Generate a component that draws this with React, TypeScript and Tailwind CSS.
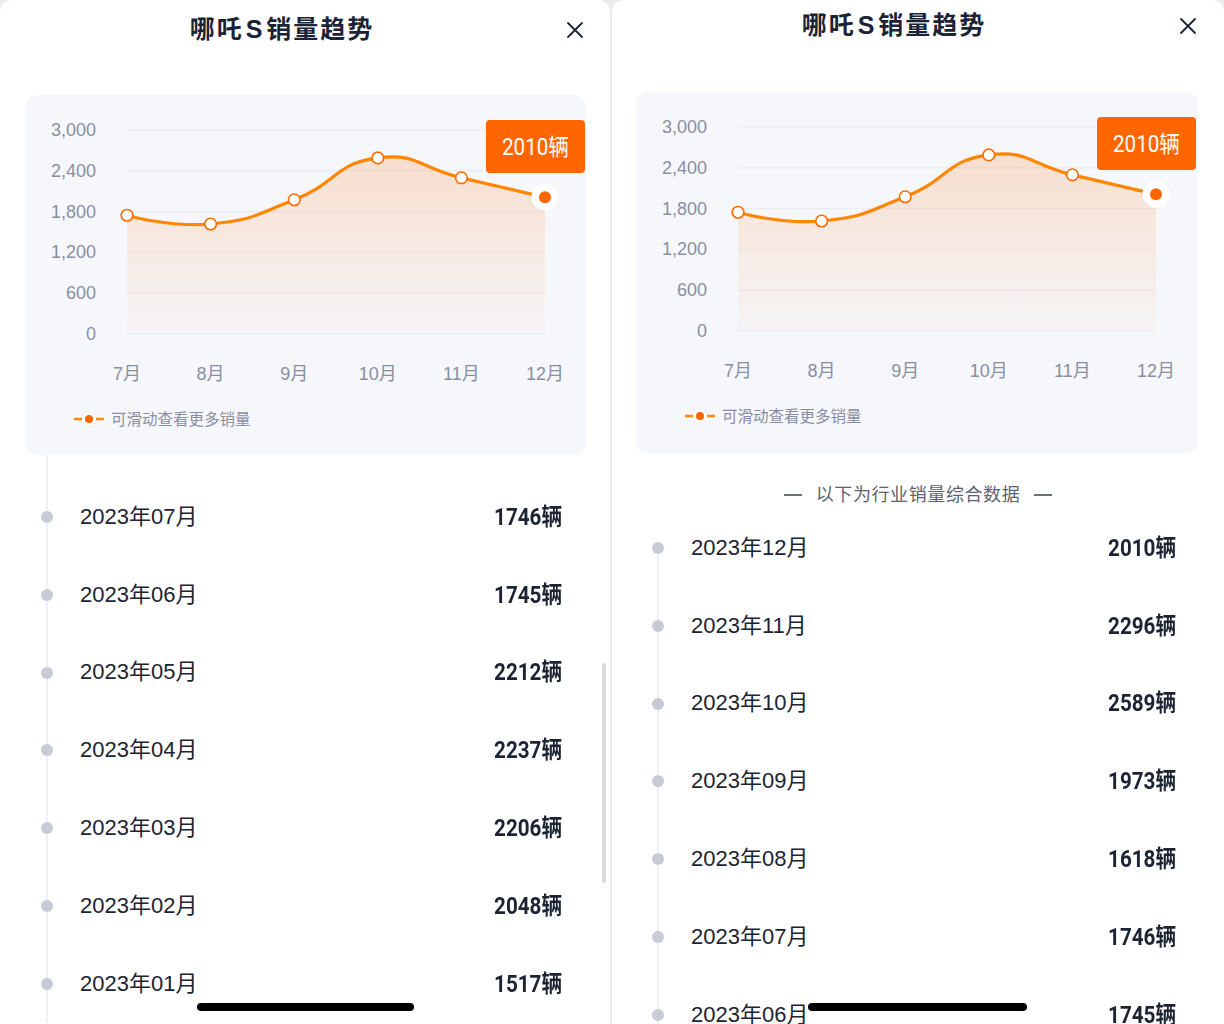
import React from "react";

const VALS = [1746, 1618, 1973, 2589, 2296, 2010];
const MONTHS = ["7月", "8月", "9月", "10月", "11月", "12月"];
const X0 = 102;
const X1 = 520;
const Y0 = 239;
const YT = 35;
const FONT = '"Liberation Sans", "Noto Sans CJK SC", sans-serif';

const pts: [number, number][] = VALS.map((v, i) => [
  X0 + (i * (X1 - X0)) / 5,
  Y0 - (v * (Y0 - YT)) / 3000,
]);

function smoothPath(p: [number, number][]) {
  const s = 0.5;
  const cps = p.map((cur, i) => {
    const prev = p[i - 1];
    const next = p[i + 1];
    if (!prev || !next) return [cur, cur];
    const vx = (next[0] - prev[0]) * s;
    const vy = (next[1] - prev[1]) * s;
    const dp = Math.hypot(cur[0] - prev[0], cur[1] - prev[1]);
    const dn = Math.hypot(next[0] - cur[0], next[1] - cur[1]);
    const r = dn / (dp + dn);
    return [
      [cur[0] - vx * (1 - r), cur[1] - vy * (1 - r)],
      [cur[0] + vx * r, cur[1] + vy * r],
    ];
  });
  let d = `M${p[0][0]},${p[0][1]}`;
  for (let i = 1; i < p.length; i++) {
    const a = cps[i - 1][1];
    const b = cps[i][0];
    d += ` C${a[0]},${a[1]} ${b[0]},${b[1]} ${p[i][0]},${p[i][1]}`;
  }
  return d;
}

const LINE = smoothPath(pts);
const AREA = `${LINE} L${X1},${Y0} L${X0},${Y0} Z`;
const YLABELS = ["3,000", "2,400", "1,800", "1,200", "600", "0"];

function Chart({ h, id }: { h: number; id: string }) {
  return (
    <div className={h === 360 ? "h-[360px] w-[561px] rounded-[12px] bg-[#f6f7fb]" : "h-[361px] w-[562px] rounded-[12px] bg-[#f6f7fb]"}>
      <svg width="562" height={h} viewBox={`0 0 562 ${h}`} style={{ display: "block" }}>
        <defs>
          <linearGradient id={`g${id}`} x1="0" y1="60" x2="0" y2="239" gradientUnits="userSpaceOnUse">
            <stop offset="0" stopColor="#ff7a1a" stopOpacity="0.2" />
            <stop offset="1" stopColor="#ff7a1a" stopOpacity="0.02" />
          </linearGradient>
          <filter id={`s${id}`} x="-50%" y="-50%" width="200%" height="200%">
            <feDropShadow dx="0" dy="0" stdDeviation="1" floodColor="#000" floodOpacity="0.12" />
          </filter>
        </defs>
        {YLABELS.map((l, i) => {
          const y = YT + (i * (Y0 - YT)) / 5;
          return (
            <g key={l}>
              <line x1={X0} x2={X1} y1={y} y2={y} stroke="#e7e8ee" strokeWidth="1" />
              <text x="71" y={y} textAnchor="end" dominantBaseline="central" fontSize="18" fill="#888fa2" fontFamily={FONT}>
                {l}
              </text>
            </g>
          );
        })}
        <path d={AREA} fill={`url(#g${id})`} />
        <path d={LINE} fill="none" stroke="#ff8600" strokeWidth="3.2" strokeLinejoin="round" />
        {pts.slice(0, 5).map((p, i) => (
          <circle key={i} cx={p[0]} cy={p[1]} r="5.8" fill="#fff" stroke="#ff6a00" strokeWidth="1.6" />
        ))}
        <circle cx={pts[5][0]} cy={pts[5][1]} r="13.5" fill="#fff" />
        <circle cx={pts[5][0]} cy={pts[5][1]} r="6" fill="#ff6600" />
        {MONTHS.map((m, i) => (
          <text key={m} x={pts[i][0]} y="279" textAnchor="middle" dominantBaseline="central" fontSize="18" fill="#888fa2" fontFamily={FONT}>
            {m}
          </text>
        ))}
        <rect x="461" y="25" width="99" height="53" rx="4" fill="#ff6600" />
        <text
          x="510.5"
          y="52"
          textAnchor="middle"
          dominantBaseline="central"
          fontSize="23"
          fill="#fff"
          fontFamily='Roboto, "Noto Sans CJK SC", sans-serif'
          textLength="67"
          lengthAdjust="spacingAndGlyphs"
        >
          2010辆
        </text>
        <line x1="49" x2="57" y1="324" y2="324" stroke="#ff8a00" strokeWidth="2.5" />
        <line x1="71" x2="79" y1="324" y2="324" stroke="#ff8a00" strokeWidth="2.5" />
        <circle cx="64" cy="324" r="7" fill="#fff" filter={`url(#s${id})`} />
        <circle cx="64" cy="324" r="4" fill="#ff6600" />
        <text x="86" y="324" dominantBaseline="central" fontSize="15.5" fill="#888fa2" fontFamily={FONT}>
          可滑动查看更多销量
        </text>
      </svg>
    </div>
  );
}

function CloseIcon() {
  return (
    <svg width="18" height="18" viewBox="0 0 18 18">
      <path d="M2 2 L16 16 M16 2 L2 16" stroke="#1b2336" strokeWidth="1.8" strokeLinecap="round" />
    </svg>
  );
}

function Row({ date, value, topLine, bottomLine, left }: { date: string; value: string; topLine: boolean; bottomLine: boolean; left: boolean }) {
  return (
    <div className="flex h-[77.8px] shrink-0 items-stretch pr-[48px]">
      <div className={left ? "ml-[41px] flex w-[12px] flex-col items-center" : "ml-[40px] flex w-[12px] flex-col items-center"}>
        <div className={topLine ? "w-[2px] flex-1 bg-[#eef0f4]" : "w-[2px] flex-1"} />
        <div className="h-[12px] w-[12px] rounded-full bg-[#c8cbd6]" />
        <div className={bottomLine ? "w-[2px] flex-1 bg-[#eef0f4]" : "w-[2px] flex-1"} />
      </div>
      <div className="ml-[27px] self-center text-[22px] leading-none text-[#1c2434]" style={{ fontFamily: FONT }}>
        {date}
      </div>
      <div
        className="ml-auto origin-right scale-x-[0.86] self-center text-[24px] font-bold leading-none text-[#1c2434]"
        style={{ fontFamily: 'Roboto, "Noto Sans CJK SC", sans-serif' }}
      >
        {value}
      </div>
    </div>
  );
}

function Header({ h }: { h: "l" | "r" }) {
  return (
    <div className={h === "l" ? "relative flex h-[60px] shrink-0 items-center justify-center pr-[46px]" : "relative flex h-[52px] shrink-0 items-center justify-center pr-[48px]"}>
      <div className="text-[25px] font-bold tracking-[2px] text-[#1b2336]" style={{ fontFamily: FONT }}>
        哪吒<span className="mx-[2px]">S</span>销量趋势
      </div>
      <div className={h === "l" ? "absolute right-[26px] top-[21px]" : "absolute right-[27px] top-[17px]"}>
        <CloseIcon />
      </div>
    </div>
  );
}

const LEFT = [
  ["2023年07月", "1746辆"],
  ["2023年06月", "1745辆"],
  ["2023年05月", "2212辆"],
  ["2023年04月", "2237辆"],
  ["2023年03月", "2206辆"],
  ["2023年02月", "2048辆"],
  ["2023年01月", "1517辆"],
];
const RIGHT = [
  ["2023年12月", "2010辆"],
  ["2023年11月", "2296辆"],
  ["2023年10月", "2589辆"],
  ["2023年09月", "1973辆"],
  ["2023年08月", "1618辆"],
  ["2023年07月", "1746辆"],
  ["2023年06月", "1745辆"],
];

export default function App() {
  return (
    <div className="flex h-[1024px] w-[1224px] gap-[2px] overflow-hidden bg-[#ebebeb]" style={{ fontFamily: FONT }}>
      <div className="relative flex w-[610px] shrink-0 flex-col overflow-hidden rounded-t-[12px] bg-white">
        <Header h="l" />
        <div className="ml-[25px] mt-[35px]">
          <Chart h={360} id="l" />
        </div>
        <div className="flex min-h-0 flex-1 flex-col overflow-hidden">
          <div className="ml-[41px] flex h-[23px] w-[12px] shrink-0 justify-center">
            <div className="w-[2px] bg-[#eef0f4]" />
          </div>
          {LEFT.map(([d, v]) => (
            <Row key={d} date={d} value={v} topLine bottomLine left />
          ))}
        </div>
        <div className="absolute left-[602px] top-[663px] h-[220px] w-[4px] rounded-full bg-[#dcdcdc]" />
        <div className="absolute left-[197px] top-[1003px] h-[8px] w-[217px] rounded-full bg-black" />
      </div>
      <div className="relative flex w-[612px] shrink-0 flex-col overflow-hidden rounded-t-[12px] bg-white">
        <Header h="r" />
        <div className="ml-[24px] mt-[40px]">
          <Chart h={361} id="r" />
        </div>
        <div className="mt-[30px] flex h-[24px] shrink-0 items-center justify-center gap-[14px] text-[18px] tracking-[0.6px] text-[#5e6372]">
          <div className="h-[1.5px] w-[18px] bg-[#6a6f7d]" />
          <span>以下为行业销量综合数据</span>
          <div className="h-[1.5px] w-[18px] bg-[#6a6f7d]" />
        </div>
        <div className="mt-[2px] flex min-h-0 flex-1 flex-col overflow-hidden">
          {RIGHT.map(([d, v], i) => (
            <Row key={d} date={d} value={v} topLine={i > 0} bottomLine left={false} />
          ))}
        </div>
        <div className="absolute left-[196px] top-[1003px] h-[8px] w-[219px] rounded-full bg-black" />
      </div>
    </div>
  );
}
